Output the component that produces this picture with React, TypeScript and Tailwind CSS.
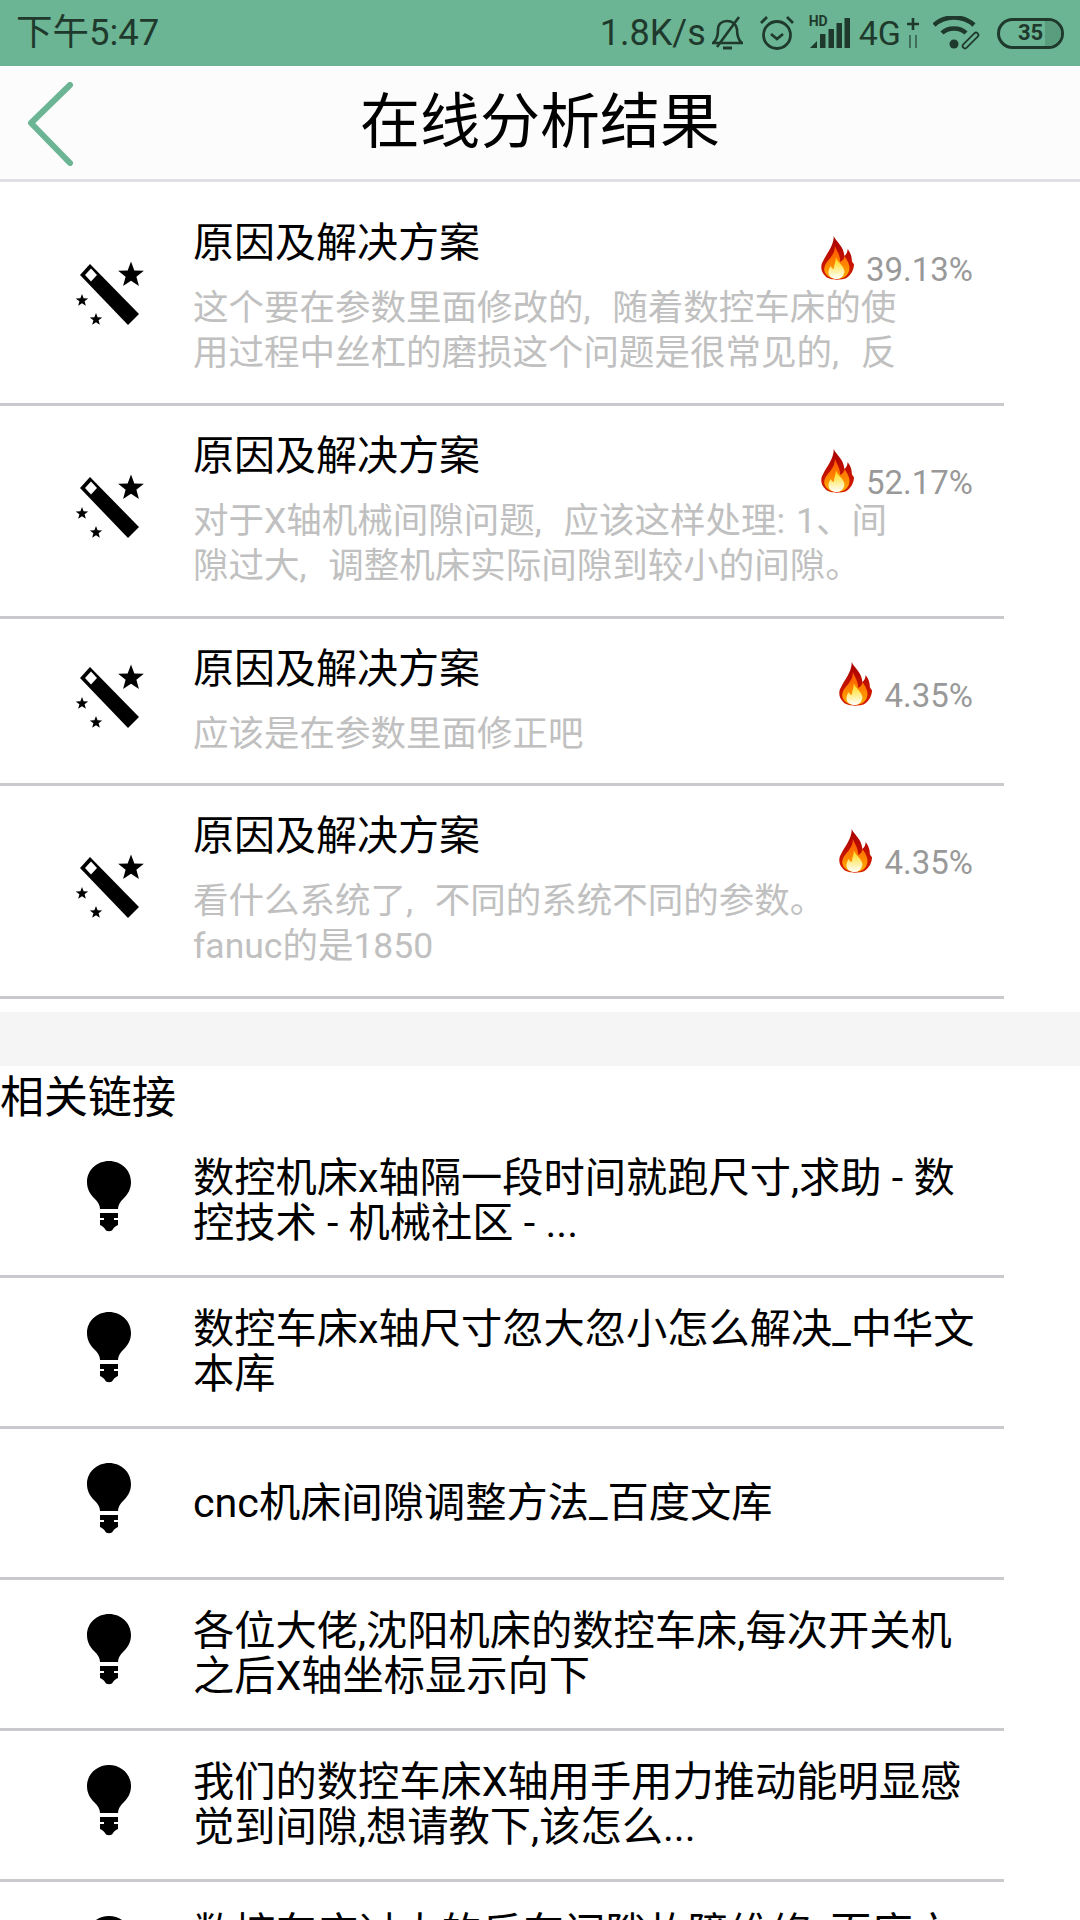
import React from "react";

const answers = [
  { pct: "39.13%", text: "这个要在参数里面修改的, 随着数控车床的使用过程中丝杠的磨损这个问题是很常见的, 反", pr: "pr-[94px]" },
  { pct: "52.17%", text: "对于X轴机械间隙问题, 应该这样处理:\u2009\u200A1、间隙过大, 调整机床实际间隙到较小的间隙。", pr: "pr-[94px]" },
  { pct: "4.35%", text: "应该是在参数里面修正吧", pr: "pr-[94px]" },
  { pct: "4.35%", text: "看什么系统了, 不同的系统不同的参数。fanuc的是1850", pr: "pr-[150px]" },
];

const links = [
  "数控机床x轴隔一段时间就跑尺寸,求助 - 数控技术 - 机械社区 - ...",
  "数控车床x轴尺寸忽大忽小怎么解决_中华文本库",
  "cnc机床间隙调整方法_百度文库",
  "各位大佬,沈阳机床的数控车床,每次开关机之后X轴坐标显示向下",
  "我们的数控车床X轴用手用力推动能明显感觉到间隙,想请教下,该怎么...",
  "数控车床过大的反车间隙故障维修_百度文库",
];

function starPoints(cx: number, cy: number, r: number) {
  const pts: string[] = [];
  for (let i = 0; i < 10; i++) {
    const rad = i % 2 === 0 ? r : r * 0.42;
    const a = -Math.PI / 2 + (i * Math.PI) / 5;
    pts.push(`${cx + rad * Math.cos(a)},${cy + rad * Math.sin(a)}`);
  }
  return pts.join(" ");
}

function Wand() {
  return (
    <svg width="68" height="65" viewBox="36 60 68 65" className="block">
      <polygon points="50,63 40,74 88,124 99,113" fill="#000" />
      <polygon points="51,67.500 57,74 51,80.500 45,74" fill="#fff" />
      <polygon points={starPoints(91, 74, 13.5)} fill="#000" />
      <polygon points={starPoints(42, 99.500, 6.500)} fill="#000" />
      <polygon points={starPoints(56, 118.500, 6.500)} fill="#000" />
    </svg>
  );
}

function Bulb() {
  return (
    <svg width="44" height="71" viewBox="0 0 44 71" className="block">
      <path d="M22 0 C10 0 0 9 0 21 C0 28 3 33 7 37 C11 41 13 44 13 48 L31 48 C31 44 33 41 37 37 C41 33 44 28 44 21 C44 9 34 0 22 0 Z" fill="#000" />
      <path d="M13 52 L31 52 L31 57 L27 57 L27 59 L31 59 L31 64 C29 65 27 66 26 68 C25 71 19 71 18 68 C17 66 15 65 13 64 L13 59 L17 59 L17 57 L13 57 Z" fill="#000" />
    </svg>
  );
}

function Flame({ id }: { id: number }) {
  return (
    <svg width="33" height="44" viewBox="0 0 31 44" preserveAspectRatio="none" className="block">
      <defs>
        <linearGradient id={`outer${id}`} x1="0" y1="0" x2="0" y2="1">
          <stop offset="0" stopColor="#a80000" />
          <stop offset="1" stopColor="#d82000" />
        </linearGradient>
        <linearGradient id={`mid${id}`} x1="0" y1="0" x2="0" y2="1">
          <stop offset="0" stopColor="#ff5000" />
          <stop offset="1" stopColor="#ffb000" />
        </linearGradient>
        <linearGradient id={`inner${id}`} x1="0" y1="0" x2="0" y2="1">
          <stop offset="0" stopColor="#ffd800" />
          <stop offset="1" stopColor="#ffffff" />
        </linearGradient>
      </defs>
      <path d="M12 0 C14 6 21 9 22 20 C24 18 25 16 25 13 C28 17 29 21 29 25 C30 27 30 27 31 28 C31 34 28 39 24 42 C20 44 8 45 4 40 C0 36 -1 30 2 25 C5 18 12 10 12 0 Z" fill={`url(#outer${id})`} />
      <path d="M13 10 C15 15 18 19 18 26 C20 25 22 23 22 20 C26 26 28 31 26 36 C24 41 19 43 15 43 C10 43 4 40 3 34 C3 27 8 24 10 20 C12 17 13 14 13 10 Z" fill={`url(#mid${id})`} />
      <path d="M14 21 C15 26 21 29 22 35 C22 40 18 43 15 43 C11 43 7 41 7 36 C7 34 8 32 9 30 C10 32 11 33 12 33 C12 29 14 26 14 21 Z" fill={`url(#inner${id})`} />
    </svg>
  );
}

function StatusIcons() {
  const c = "#1f3a2d";
  return (
    <div className="flex items-center">
      <svg width="31" height="34" viewBox="0 0 31 34" className="ml-[6px]" fill="none" stroke={c} strokeWidth="2.600">
        <path d="M1 27 C5 24 6 20 6 14 C6 8 10 5 15 5 C20 5 24 8 25 13 C25 20 26 24 30 27 Z" />
        <path d="M11 32 L20 32" strokeWidth="3" />
        <path d="M5 31 L27 1" />
      </svg>
      <svg width="34" height="36" viewBox="0 0 34 36" className="ml-[17px]" fill="none" stroke={c} strokeWidth="2.800">
        <circle cx="17" cy="20" r="13.500" />
        <path d="M11 19 L17 24 L23 19" />
        <path d="M1 8 L7 2 M27 2 L33 8" />
      </svg>
      <div className="relative ml-[15px] h-[30px] w-[41px]">
        <span className="absolute left-0 top-[-4px] text-[14px] leading-[14px] font-bold text-[#1f3a2d]">HD</span>
        <svg width="41" height="30" viewBox="0 0 41 30" className="absolute inset-0" fill={c}>
          <path d="M1 30 L8 23 L8 30 Z" />
          <rect x="11" y="16" width="5.500" height="14" />
          <rect x="19.500" y="11" width="5.500" height="19" />
          <rect x="27.500" y="5" width="5.500" height="25" />
          <rect x="35.500" y="0" width="5.500" height="30" />
        </svg>
      </div>
      <span className="ml-[9px] text-[34px] leading-[36px] text-[#1f3a2d]">4G</span>
      <svg width="14" height="32" viewBox="0 0 14 32" className="ml-[5px]">
        <path d="M7 1 V13 M1 7 H13" stroke={c} strokeWidth="2.600" />
        <path d="M4 18 V31 M10 18 V31" stroke="#3f6f58" strokeWidth="2" />
      </svg>
      <svg width="48" height="34" viewBox="0 0 48 34" className="ml-[13px]" fill="none">
        <path d="M1 9 C12 -1 30 -1 41 9" stroke={c} strokeWidth="4.500" />
        <path d="M9 17 C15 11 27 11 33 17" stroke={c} strokeWidth="4.500" />
        <circle cx="21" cy="28" r="4.500" fill={c} />
        <path d="M32 30 L43 19" stroke={c} strokeWidth="6.500" strokeLinecap="round" />
        <path d="M32 30 L43 19" stroke="#6bb594" strokeWidth="3" strokeLinecap="round" />
      </svg>
      <div className="relative ml-[16px] flex h-[31px] w-[67px] items-center justify-center overflow-hidden rounded-full border-[3px] border-[#1f3a2d]">
        <div className="absolute inset-y-0 right-0 w-[16px] bg-[#5a9c7e]" />
        <span className="relative text-[22px] leading-[24px] font-bold text-[#1f3a2d]">35</span>
      </div>
    </div>
  );
}

export default function App() {
  return (
    <div
      className="h-[1920px] w-[1080px] overflow-hidden bg-white"
      style={{ fontFamily: 'Roboto, "Noto Sans CJK SC", sans-serif' }}
    >
      <div className="flex h-[66px] items-center justify-between bg-[#6bb594] pl-[16px] pr-[16px] text-[#1f3a2d]">
        <span className="text-[36.500px] leading-[40px]">下午5:47</span>
        <div className="flex items-center">
          <span className="text-[36px] leading-[40px]">1.8K/s</span>
          <StatusIcons />
        </div>
      </div>

      <div className="relative flex h-[116px] items-center justify-center border-b-[3px] border-[#dfdfe4] bg-[#fcfcfc]">
        <svg width="46" height="84" viewBox="0 0 46 84" className="absolute left-[28px] top-[16px]" fill="none">
          <path d="M42 3 L3 41 L42 81" stroke="#6bb594" strokeWidth="6" strokeLinecap="round" strokeLinejoin="round" />
        </svg>
        <h1 className="text-[60px] leading-[70px] font-normal text-black">在线分析结果</h1>
      </div>

      <div className="pt-[11px]">
        {answers.map((a, i) => (
          <div key={i} className={`flex w-[1004px] border-b-[3px] border-[#c9c9ce] ${i === 2 ? "h-[167px]" : "h-[213px]"}`}>
            <div className="flex w-[193px] shrink-0 items-center justify-center pb-[10px] pl-[26px]">
              <Wand />
            </div>
            <div className="min-w-0 flex-1 pt-[26px]">
              <div className="flex h-[58px] justify-between pr-[31px]">
                <span className="text-[41px] leading-[48px] text-black">原因及解决方案</span>
                <div className="flex items-start">
                  <div className="mt-[17px]">
                    <Flame id={i} />
                  </div>
                  <span className="ml-[12px] mt-[32px] text-[33px] leading-[38px] text-[#999999]">{a.pct}</span>
                </div>
              </div>
              <p className={`mt-[9px] text-[35.500px] leading-[45px] [word-spacing:13px] text-[#c0c0c0] ${a.pr}`}>{a.text}</p>
            </div>
          </div>
        ))}
      </div>

      <div className="mt-[13px] h-[54px] bg-[#f5f5f5]" />
      <div className="flex h-[61px] items-center pt-[2px] text-[44px] leading-[50px] text-black">相关链接</div>

      {links.map((text, i) => (
        <div key={i} className="flex h-[151px] w-[1004px] border-b-[3px] border-[#c9c9ce]">
          <div className="flex w-[193px] shrink-0 justify-center pl-[24px] pt-[34px]">
            <Bulb />
          </div>
          <div className="flex min-w-0 flex-1 items-center pr-[26px]">
            <p className="text-[41.250px] leading-[45px] text-black">{text}</p>
          </div>
        </div>
      ))}
    </div>
  );
}
